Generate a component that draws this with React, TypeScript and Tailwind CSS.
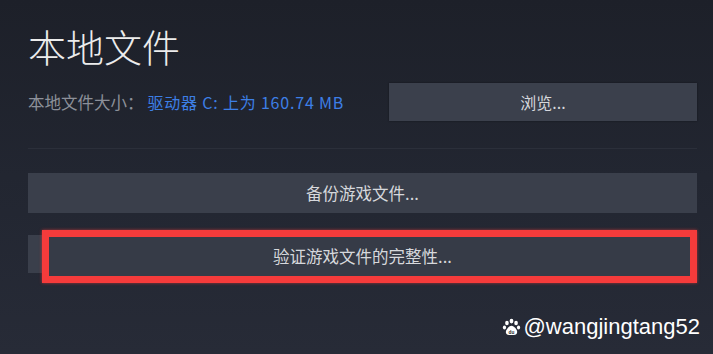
import React from "react";

const cjk = { fontFamily: '"Noto Sans CJK SC", "Noto Sans", sans-serif' };

function Paw() {
  return (
    <svg width="19" height="19" viewBox="0 0 20 20" className="mr-[3px]">
      <ellipse cx="5.2" cy="5.2" rx="1.9" ry="2.4" fill="#fff" />
      <ellipse cx="10" cy="3.2" rx="2" ry="2.5" fill="#fff" />
      <ellipse cx="14.8" cy="5.2" rx="1.9" ry="2.4" fill="#fff" />
      <ellipse cx="2.6" cy="10" rx="1.7" ry="2.1" fill="#fff" />
      <ellipse cx="17.4" cy="10" rx="1.7" ry="2.1" fill="#fff" />
      <path d="M10 8.2c-2.8 0-6 4.2-6 6.6 0 2 1.6 3 3.4 3h5.2c1.8 0 3.4-1 3.4-3 0-2.4-3.2-6.6-6-6.6z" fill="#fff" />
      <text x="10" y="16.4" fontSize="5" textAnchor="middle" fill="#222" fontFamily="Liberation Sans, sans-serif" fontWeight="700">du</text>
    </svg>
  );
}

export default function App() {
  return (
    <div
      className="relative w-[713px] h-[354px] overflow-hidden bg-gradient-to-b from-[#1d2029] via-[#222631] to-[#272b37] pl-[28px] pr-[16px] pt-[25px]"
      style={cjk}
    >
      <div className="text-[38px] leading-[42px] font-light text-[#ececec]">本地文件</div>

      <div className="mt-[16px] flex items-center justify-between h-[38px]">
        <div className="flex items-center text-[16.5px] leading-none">
          <span className="text-[#8c9099]">本地文件大小：</span>
          <span className="ml-[4px] text-[16px] tracking-[0.8px] text-[#3d7fe6]">驱动器 C: 上为 160.74 MB</span>
        </div>
        <div className="w-[308px] h-[38px] bg-[#3b404c] flex items-center justify-center text-[16px] text-[#d6d8dc] shadow-[0_0_2px_rgba(0,0,0,0.4)]">
          浏览...
        </div>
      </div>

      <div className="mt-[27px] h-px bg-[#2b2f3a]" />

      <div className="mt-[24px] h-[40px] bg-[#3a3f4b] flex items-center justify-center text-[16.5px] text-[#d6d8dc]">
        备份游戏文件...
      </div>

      <div className="mt-[22px] h-[38px] bg-[#3a3f4b]" />

      <div className="absolute left-[42px] top-[230px] w-[655px] h-[53px] border-[7px] border-[#f53b3b] bg-[#363b47] flex items-center justify-center pr-[14px] text-[16.5px] text-[#d6d8dc] shadow-[0_0_3px_rgba(255,60,60,0.6)]">
        验证游戏文件的完整性...
      </div>

      <div
        className="absolute right-[13px] top-[316px] flex items-center text-[22px] leading-none text-white"
        style={{ fontFamily: '"Liberation Sans", Arial, sans-serif' }}
      >
        <Paw />
        <span>@wangjingtang52</span>
      </div>
    </div>
  );
}
